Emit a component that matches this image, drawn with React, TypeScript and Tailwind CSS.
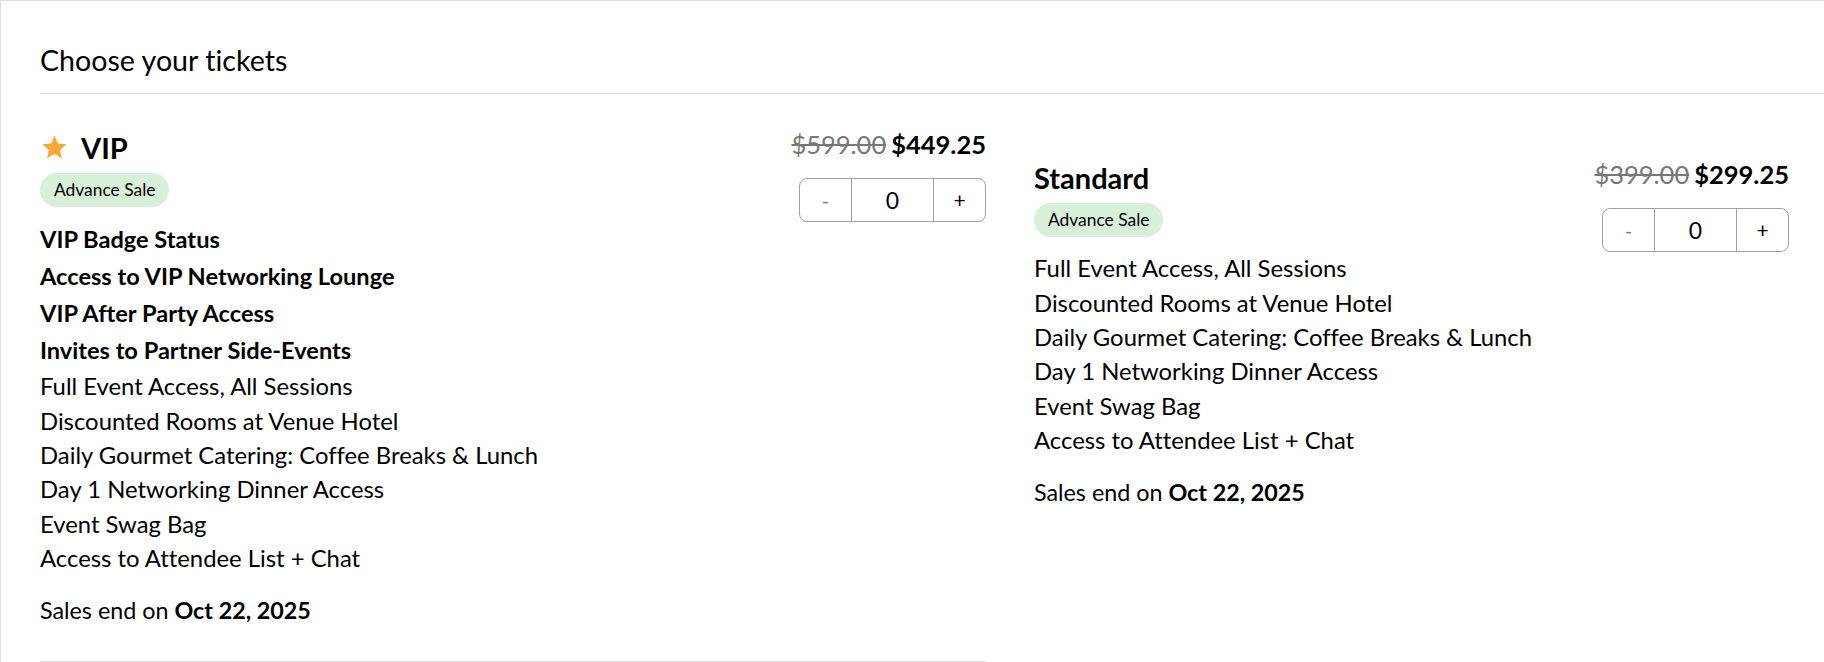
import React from 'react';

interface Ticket {
  name: string;
  vip?: boolean;
  oldPrice: string;
  price: string;
  perks: string[];
  basics: string[];
  salesEnd: string;
}

const basics = [
  'Full Event Access, All Sessions',
  'Discounted Rooms at Venue Hotel',
  'Daily Gourmet Catering: Coffee Breaks & Lunch',
  'Day 1 Networking Dinner Access',
  'Event Swag Bag',
  'Access to Attendee List + Chat',
];

const tickets: Ticket[] = [
  {
    name: 'VIP',
    vip: true,
    oldPrice: '$599.00',
    price: '$449.25',
    perks: [
      'VIP Badge Status',
      'Access to VIP Networking Lounge',
      'VIP After Party Access',
      'Invites to Partner Side-Events',
    ],
    basics,
    salesEnd: 'Oct 22, 2025',
  },
  {
    name: 'Standard',
    oldPrice: '$399.00',
    price: '$299.25',
    perks: [],
    basics,
    salesEnd: 'Oct 22, 2025',
  },
];

const StarIcon = () => (
  <svg width="29" height="29" viewBox="0 0 24 24" className="shrink-0">
    <path fill="#f9a633" d="M12 17.27L18.18 21l-1.64-7.03L22 9.24l-7.19-.61L12 2 9.19 8.63 2 9.24l5.46 4.73L5.82 21z" />
  </svg>
);

const Stepper = () => (
  <div className="flex h-[44px] w-[187px] rounded-[8px] border border-[#a0a0a0] text-black">
    <button className="w-[52px] border-r border-[#a0a0a0] text-[20px] text-[#777]">-</button>
    <div className="flex w-[82px] items-center justify-center border-r border-[#a0a0a0] text-[23px]">0</div>
    <button className="flex-1 text-[21px]">+</button>
  </div>
);

const TicketCard = ({ ticket, last, className }: { ticket: Ticket; last?: boolean; className?: string }) => (
  <div className={`flex justify-between pt-[32px] ${last ? '' : 'border-b border-[#dddddd] pb-[33px]'} ${className ?? ''}`}>
    <div className="flex flex-col">
      <div className="flex items-center gap-3">
        {ticket.vip && <StarIcon />}
        <h3 className="text-[29px] font-bold leading-[1.5]">{ticket.name}</h3>
      </div>
      <div className="mt-[4px]">
        <span className="inline-flex h-[34px] items-center rounded-full bg-[#d8efd9] px-[14px] text-[17.4px]">
          Advance Sale
        </span>
      </div>
      <ul className="mt-[14px]">
        {ticket.perks.map((p) => (
          <li key={p} className="text-[23.6px] font-bold leading-[37px]">{p}</li>
        ))}
        {ticket.basics.map((b) => (
          <li key={b} className="text-[23.85px] leading-[34.3px]">{b}</li>
        ))}
      </ul>
      <p className="mt-[18px] text-[23.3px] leading-[34.5px]">
        Sales end on <span className="font-bold">{ticket.salesEnd}</span>
      </p>
    </div>
    <div className="flex flex-col items-end">
      <div className="text-[25.5px] leading-[36px]">
        <span className="text-[#777] line-through">{ticket.oldPrice}</span>
        <span className="ml-[5px] font-bold">{ticket.price}</span>
      </div>
      <div className="mt-[16px]">
        <Stepper />
      </div>
    </div>
  </div>
);

export default function App() {
  return (
    <div
      className="min-h-[662px] border-l border-t border-[#dddddd] bg-white pl-[39px] text-black [font-variant-ligatures:none]"
      style={{ fontFamily: 'Lato, "Noto Sans", sans-serif' }}
    >
      <div className="border-b border-[#dddddd] pb-[11px] pt-[38px]">
        <h2 className="text-[28.6px] leading-[1.5]">Choose your tickets</h2>
      </div>
      <div className="flex items-start gap-[48px]">
        <TicketCard ticket={tickets[0]} className="w-[946px]" />
        <TicketCard ticket={tickets[1]} last className="mt-[30px] w-[755px]" />
      </div>
    </div>
  );
}
